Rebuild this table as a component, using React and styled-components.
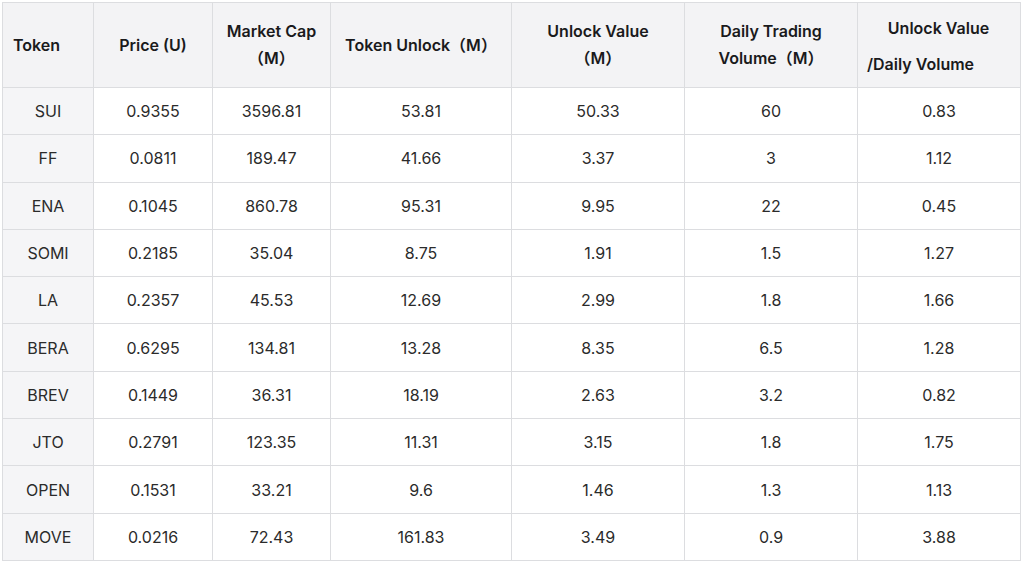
import React from "react";
import styled, { createGlobalStyle } from "styled-components";

const GlobalStyle = createGlobalStyle`
  html, body {
    margin: 0;
    padding: 0;
    background: #fff;
  }
  body {
    font-family: "Inter", "Noto Sans", "Noto Sans CJK SC", sans-serif;
  }
`;

const Page = styled.div`
  padding: 2px 4px 0 2px;
`;

const Table = styled.table`
  width: 1018px;
  border-collapse: collapse;
  table-layout: fixed;
  font-size: 16px;
  color: #2b2b2b;
`;

const HeadCell = styled.th`
  height: 84px;
  padding: 0 10px;
  background: #f3f3f5;
  border: 1px solid #dcdde0;
  font-weight: 600;
  color: #1a1a1c;
  line-height: 27px;
  text-align: ${(p) => (p.$left ? "left" : "center")};
`;

const SplitHead = styled.div`
  display: flex;
  flex-direction: column;
  line-height: 36px;
  margin-top: 1px;
  margin-left: -1px;
`;

const SplitTop = styled.span`
  text-align: center;
`;

const SplitBottom = styled.span`
  text-align: left;
`;

const Row = styled.tr`
  height: 47.3px;
`;

const Cell = styled.td`
  border: 1px solid #dcdde0;
  text-align: center;
  padding: 0 6px;
  background: ${(p) => (p.$first ? "#f5f5f7" : "#fff")};
`;

const columns = [
  { w: 91, label: "Token", left: true },
  { w: 119, label: "Price (U)" },
  { w: 118, label: <>Market Cap<br />（M）</> },
  { w: 181, label: "Token Unlock（M）" },
  { w: 173, label: <>Unlock Value<br />（M）</> },
  { w: 173, label: <>Daily Trading<br />Volume（M）</> },
  { w: 163, split: ["Unlock Value", "/Daily Volume"] },
];

const rows = [
  ["SUI", "0.9355", "3596.81", "53.81", "50.33", "60", "0.83"],
  ["FF", "0.0811", "189.47", "41.66", "3.37", "3", "1.12"],
  ["ENA", "0.1045", "860.78", "95.31", "9.95", "22", "0.45"],
  ["SOMI", "0.2185", "35.04", "8.75", "1.91", "1.5", "1.27"],
  ["LA", "0.2357", "45.53", "12.69", "2.99", "1.8", "1.66"],
  ["BERA", "0.6295", "134.81", "13.28", "8.35", "6.5", "1.28"],
  ["BREV", "0.1449", "36.31", "18.19", "2.63", "3.2", "0.82"],
  ["JTO", "0.2791", "123.35", "11.31", "3.15", "1.8", "1.75"],
  ["OPEN", "0.1531", "33.21", "9.6", "1.46", "1.3", "1.13"],
  ["MOVE", "0.0216", "72.43", "161.83", "3.49", "0.9", "3.88"],
];

export default function App() {
  return (
    <Page>
      <GlobalStyle />
      <Table>
        <colgroup>
          {columns.map((c, i) => (
            <col key={i} style={{ width: c.w }} />
          ))}
        </colgroup>
        <thead>
          <tr>
            {columns.map((c, i) => (
              <HeadCell key={i} $left={c.left}>
                {c.split ? (
                  <SplitHead>
                    <SplitTop>{c.split[0]}</SplitTop>
                    <SplitBottom>{c.split[1]}</SplitBottom>
                  </SplitHead>
                ) : (
                  c.label
                )}
              </HeadCell>
            ))}
          </tr>
        </thead>
        <tbody>
          {rows.map((r) => (
            <Row key={r[0]}>
              {r.map((v, i) => (
                <Cell key={i} $first={i === 0}>
                  {v}
                </Cell>
              ))}
            </Row>
          ))}
        </tbody>
      </Table>
    </Page>
  );
}
